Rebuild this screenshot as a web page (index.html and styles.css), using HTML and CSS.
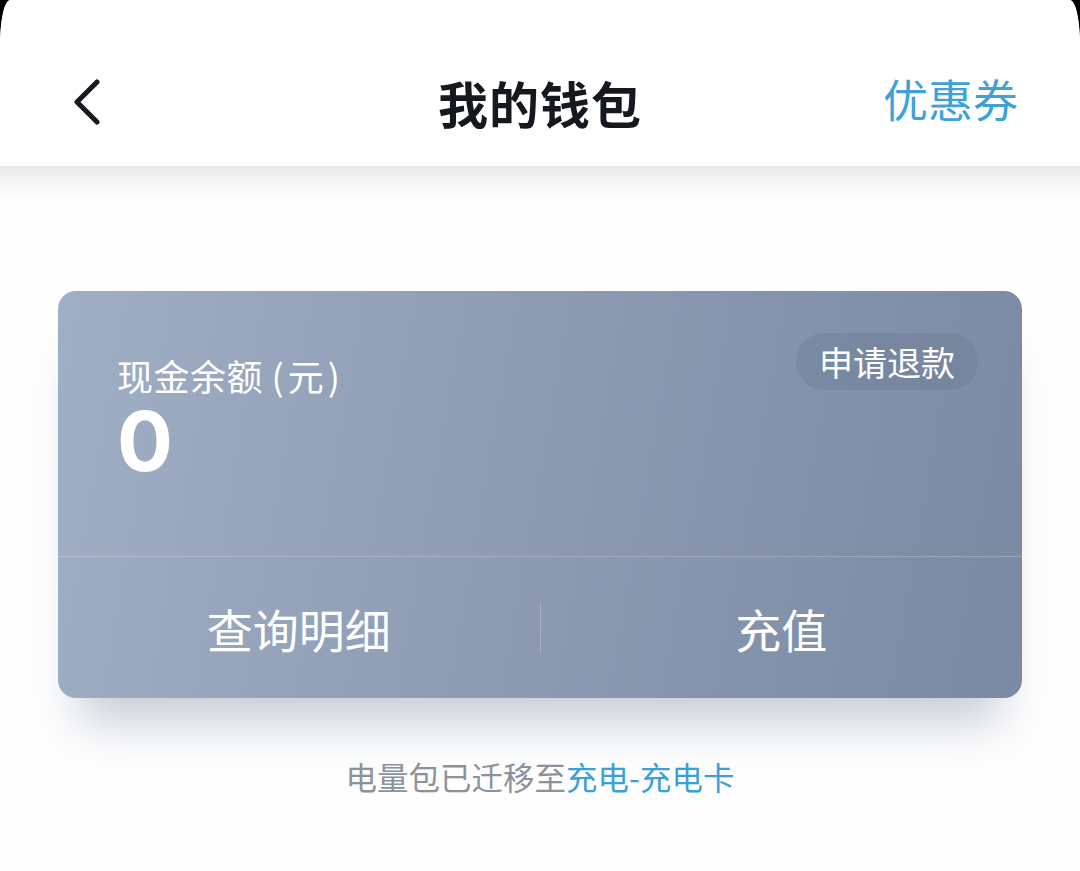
FILE: index.html
```html
<!DOCTYPE html>
<html lang="zh-CN">
<head>
<meta charset="utf-8">
<title>我的钱包</title>
<link rel="stylesheet" href="styles.css">
</head>
<body>
<div class="screen">
  <header class="topbar">
    <div class="back">
      <svg width="26" height="46" viewBox="0 0 26 46"><polyline points="23,3 3,23 23,43" fill="none" stroke="#16191f" stroke-width="5" stroke-linecap="round" stroke-linejoin="round"/></svg>
    </div>
    <h1 class="title">我的钱包</h1>
    <div class="coupon">优惠券</div>
  </header>
  <main class="content">
    <section class="card">
      <div class="card-top">
        <div class="balance">
          <div class="label">现金余额 <span class="unit">(元)</span></div>
          <div class="amount">0</div>
        </div>
        <div class="refund">申请退款</div>
      </div>
      <div class="card-actions">
        <div class="action">查询明细</div>
        <div class="vline"></div>
        <div class="action">充值</div>
      </div>
    </section>
    <p class="note">电量包已迁移至<span class="link">充电-充电卡</span></p>
  </main>
</div>
</body>
</html>
```
FILE: styles.css
```css
html { background: #000; }
body {
  margin: 0;
  font-family: "Noto Sans CJK SC", "Noto Sans", sans-serif;
}
.screen {
  min-height: 871px;
  background: #fefefe;
  border-radius: 10px 10px 0 0 / 46px 46px 0 0;
  overflow: hidden;
}
.topbar {
  height: 166px;
  box-sizing: border-box;
  padding: 38px 62px 0;
  background: #fff;
  display: grid;
  grid-template-columns: 1fr auto 1fr;
  align-items: center;
}
.back { display: flex; align-items: center; padding-left: 12px; }
.back svg { display: block; }
.title {
  margin: 0;
  font-size: 50px;
  font-weight: 700;
  color: #15181e;
  line-height: 1;
  letter-spacing: 1px;
}
.coupon {
  justify-self: end;
  font-size: 45px;
  color: #3ea2d9;
  line-height: 1;
  margin-top: -8px;
}
.content {
  background: linear-gradient(#e8e8e8 0, #f6f6f6 16px, #fefefe 36px, #fefefe 100%);
  padding: 125px 58px 0;
  min-height: 705px;
  box-sizing: border-box;
}
.card {
  height: 407px;
  border-radius: 18px;
  background: linear-gradient(100deg, #a1afc5 0%, #8e9cb4 45%, #7a8aa3 100%);
  box-shadow: 0 46px 44px -22px rgba(90, 108, 145, 0.34);
  display: flex;
  flex-direction: column;
  color: #fff;
}
.card-top {
  height: 266px;
  box-sizing: border-box;
  padding: 42px 44px 0 59px;
  display: flex;
  justify-content: space-between;
  align-items: flex-start;
  border-bottom: 1px solid rgba(255, 255, 255, 0.22);
}
.balance { margin-top: 21px; }
.label {
  font-size: 36px;
  line-height: 42px;
  letter-spacing: 0.5px;
}
.unit { letter-spacing: 4px; }
.amount {
  font-family: "Inter", "DejaVu Sans", sans-serif;
  font-weight: 700;
  font-size: 83px;
  line-height: 1;
  margin-top: 4px;
}
.refund {
  height: 57px;
  padding: 0 23px;
  border-radius: 29px;
  background: rgba(70, 84, 110, 0.14);
  font-size: 34px;
  line-height: 57px;
}
.card-actions {
  flex: 1;
  display: flex;
  align-items: center;
}
.action {
  flex: 1;
  text-align: center;
  font-size: 46px;
  line-height: 1;
}
.vline {
  width: 1px;
  height: 52px;
  background: rgba(255, 255, 255, 0.22);
}
.note {
  margin: 58px 0 0;
  text-align: center;
  font-size: 31.5px;
  line-height: 40px;
  color: #8b929c;
}
.link { color: #3aa0d6; }
```
